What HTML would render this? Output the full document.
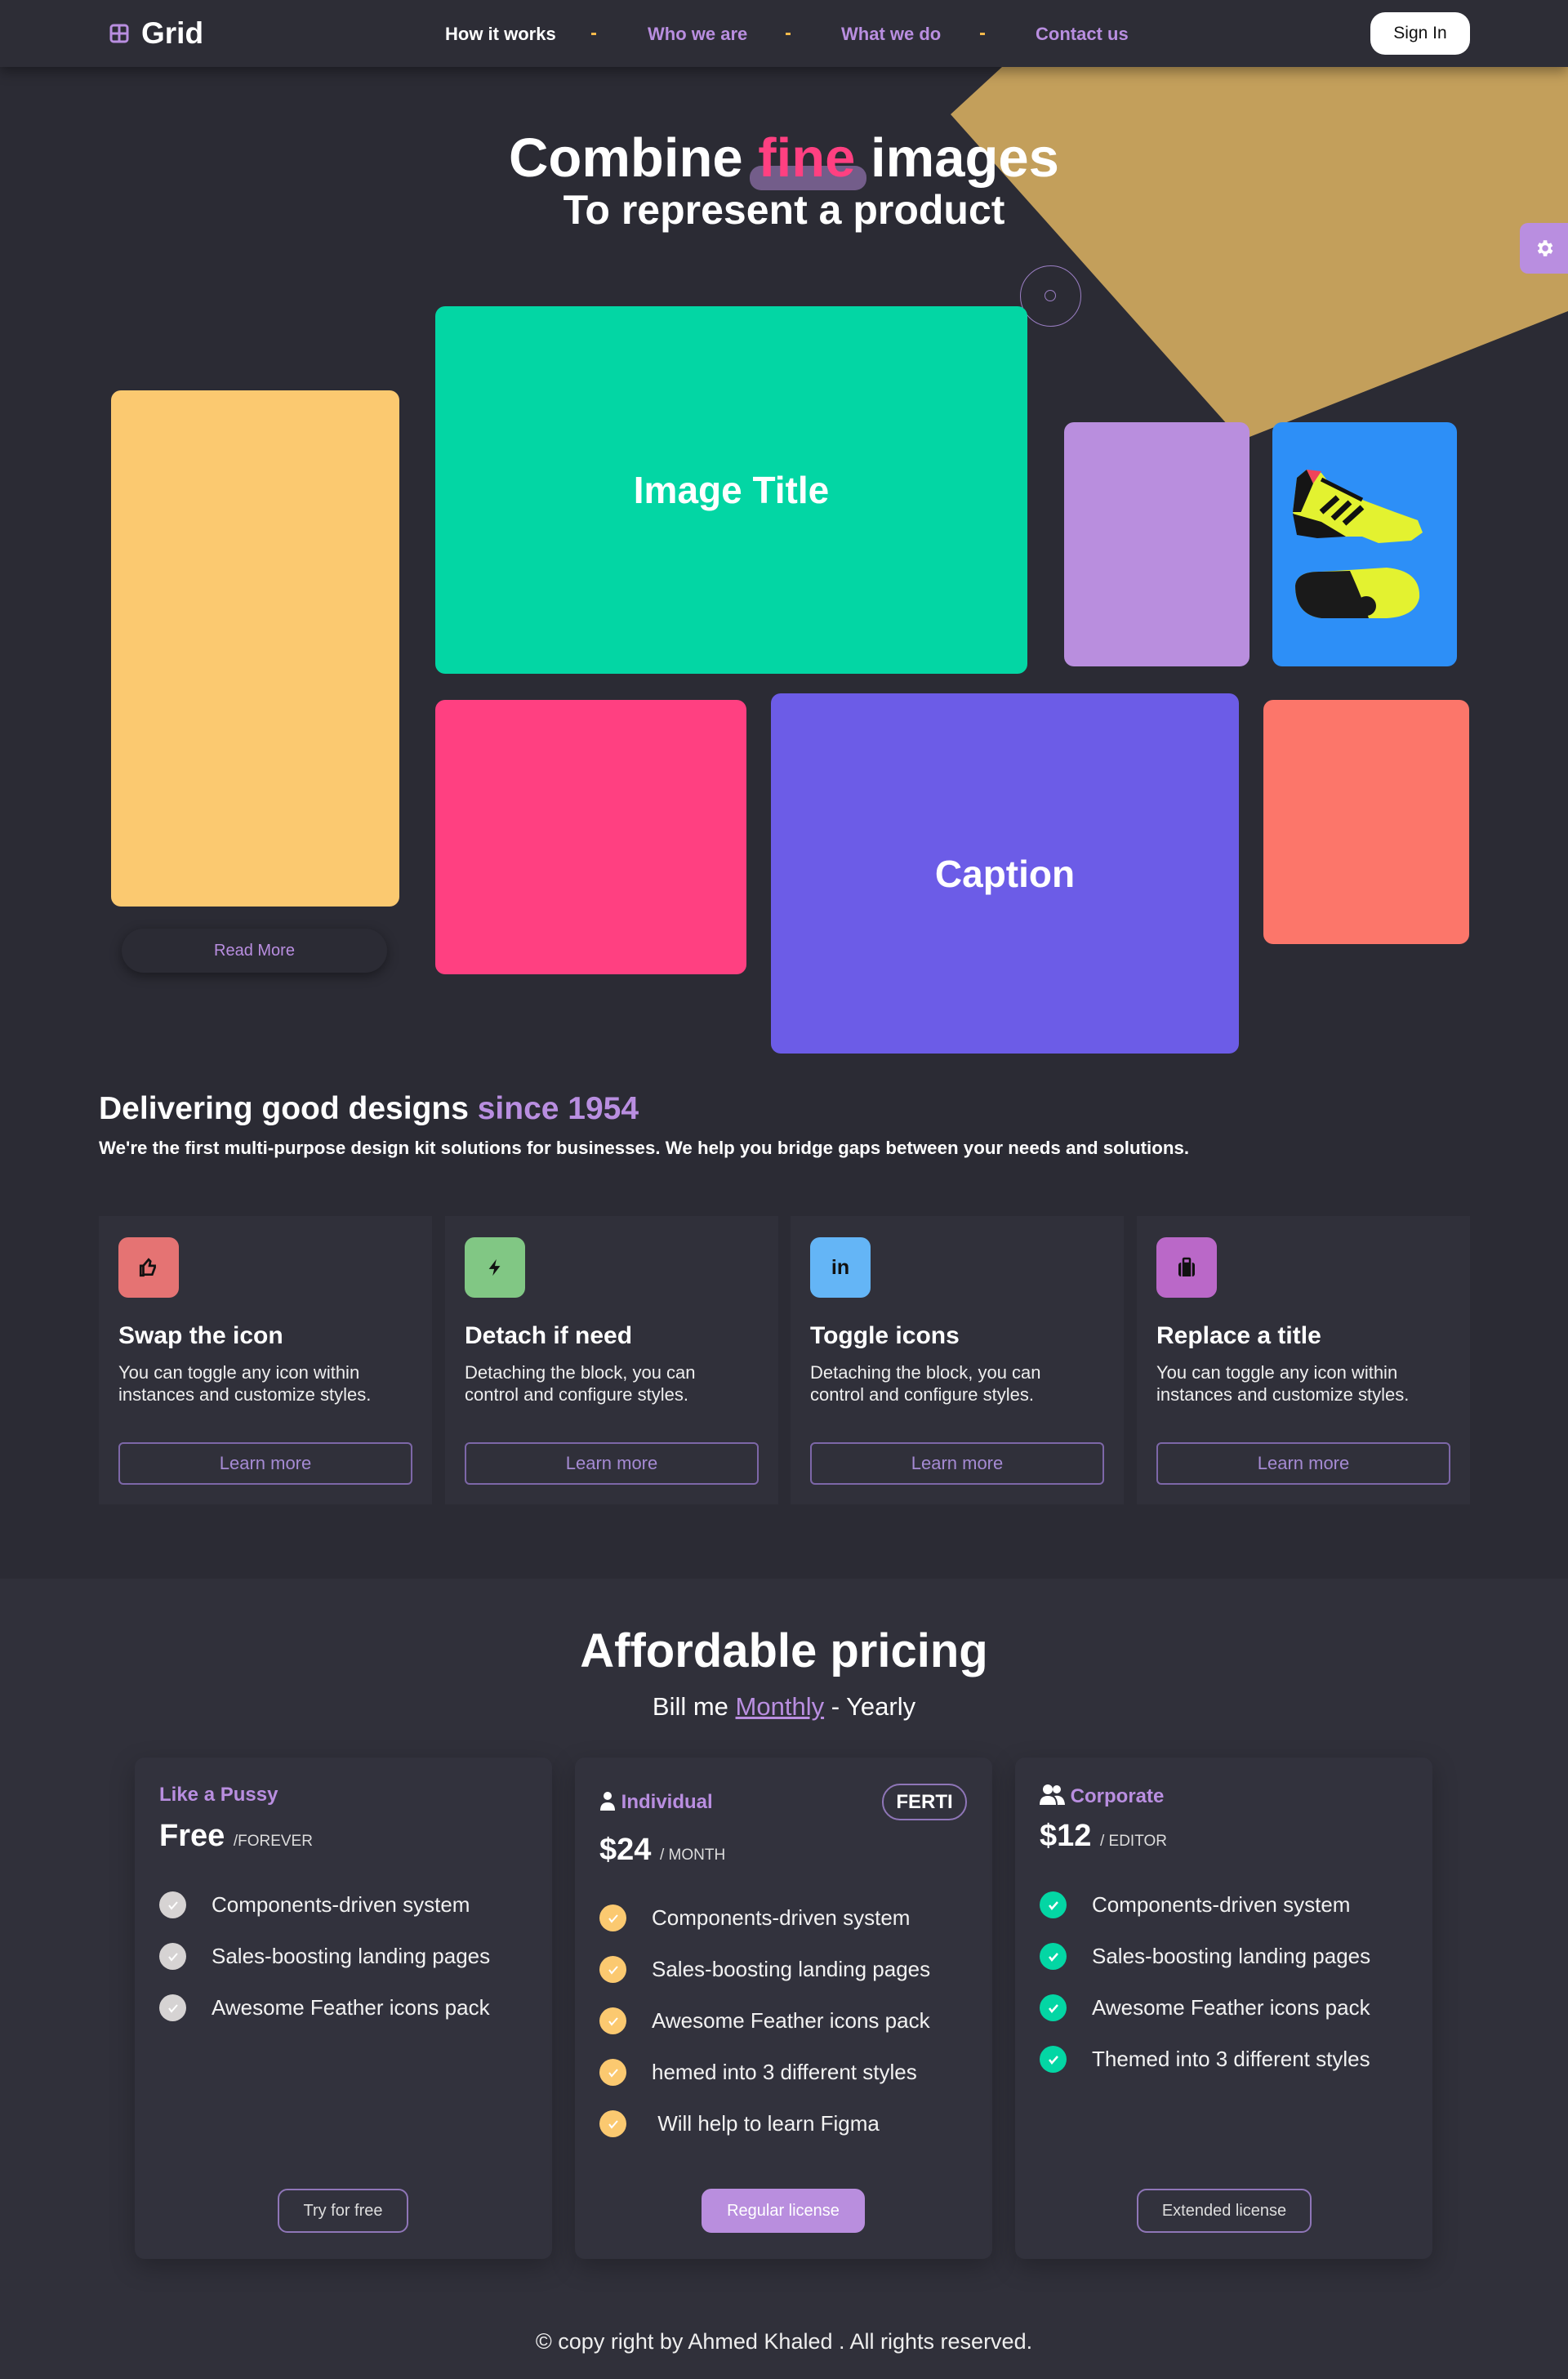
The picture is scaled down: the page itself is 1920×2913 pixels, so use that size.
<!DOCTYPE html>
<html><head><meta charset="utf-8"><style>
*{margin:0;padding:0;box-sizing:border-box}
body{width:1920px;height:2913px;background:#2b2b34;font-family:"Liberation Sans",sans-serif;color:#fff;position:relative;overflow:hidden}
.a{position:absolute}
.nav{left:0;top:0;width:1920px;height:82px;background:#2d2d36;box-shadow:0 6px 14px rgba(0,0,0,.35);z-index:5}
.nl{top:29px;font-size:22px;font-weight:bold}
.dot{top:40px;width:6px;height:3px;background:#f5b94b}
.card{border-radius:12px}
.t{font-weight:bold}
.fc{background:#30303a;top:1489px;height:353px;width:408px}
.ic{width:74px;height:74px;border-radius:12px;left:24px;top:26px;display:flex;align-items:center;justify-content:center}
.fc h3{position:absolute;left:24px;top:130px;font-size:30px}
.fc p{position:absolute;left:24px;top:178px;font-size:22px;line-height:27px;color:#eee;width:345px}
.lm{position:absolute;left:24px;top:277px;width:360px;height:52px;border:2px solid #7d67a8;border-radius:6px;color:#a58ad3;font-size:22px;text-align:center;line-height:48px}
.pc{background:#32323d;top:2152px;height:614px;width:511px;border-radius:12px;box-shadow:0 10px 30px rgba(0,0,0,.25)}
.pt{position:absolute;left:30px;font-size:24px;font-weight:bold;color:#b98ee0}
.pr{position:absolute;left:30px;font-size:38px;font-weight:bold}
.pr span{font-size:19px;font-weight:normal;color:#ddd}
.li{position:absolute;left:30px;font-size:26px;color:#f2f2f2;display:flex;align-items:center}
.ck{width:33px;height:33px;border-radius:50%;margin-right:31px;display:flex;align-items:center;justify-content:center;flex:none}
.btn{position:absolute;top:528px;height:54px;border:2px solid #8f76b8;border-radius:12px;font-size:20px;text-align:center;line-height:50px;color:#ddd}
</style></head><body>
<svg class="a" style="left:0;top:0" width="1920" height="700"><polygon points="1227,82 1920,82 1920,381 1520,539 1164,140" fill="#c39f5b"/></svg>
<div class="a nav">
 <svg class="a" style="left:134px;top:29px" width="24" height="24" viewBox="0 0 24 24"><rect x="2" y="2" width="20" height="20" rx="3" fill="none" stroke="#b98ee0" stroke-width="3"/><path d="M12 2v20M2 12h20" stroke="#b98ee0" stroke-width="3"/></svg>
 <div class="a t" style="left:173px;top:20px;font-size:37px">Grid</div>
 <div class="a nl" style="left:545px">How it works</div>
 <div class="a dot" style="left:724px"></div>
 <div class="a nl" style="left:793px;color:#b98ee0">Who we are</div>
 <div class="a dot" style="left:962px"></div>
 <div class="a nl" style="left:1030px;color:#b98ee0">What we do</div>
 <div class="a dot" style="left:1200px"></div>
 <div class="a nl" style="left:1268px;color:#b98ee0">Contact us</div>
 <div class="a" style="left:1678px;top:15px;width:122px;height:52px;background:#fff;border-radius:18px;color:#111;font-size:21px;text-align:center;line-height:52px">Sign In</div>
</div>
<div class="a" style="left:918px;top:203px;width:143px;height:30px;background:#735d8a;border-radius:14px"></div>
<div class="a t" style="left:0;width:1920px;top:154px;text-align:center;font-size:67px;line-height:80px">Combine <span style="color:#ff4081">fine</span> images</div>
<div class="a t" style="left:0;width:1920px;top:228px;text-align:center;font-size:50px">To represent a product</div>
<div class="a" style="left:1861px;top:273px;width:59px;height:62px;background:#b98ee0;border-radius:10px 0 0 10px;display:flex;align-items:center;justify-content:center"><svg width="26" height="26" viewBox="0 0 24 24"><path fill="#fff" d="M19.4 13a7.8 7.8 0 0 0 0-2l2.1-1.6-2-3.5-2.5 1a7 7 0 0 0-1.7-1L15 3h-4l-.4 2.7a7 7 0 0 0-1.7 1l-2.5-1-2 3.5L6.6 11a7.8 7.8 0 0 0 0 2l-2.2 1.6 2 3.5 2.5-1a7 7 0 0 0 1.7 1L11 21h4l.4-2.7a7 7 0 0 0 1.7-1l2.5 1 2-3.5zM13 15.5a3.5 3.5 0 1 1 0-7 3.5 3.5 0 0 1 0 7z"/></svg></div>
<div class="a" style="left:1249px;top:325px;width:75px;height:75px;border:1.5px solid #9b7fc4;border-radius:50%"></div>
<div class="a" style="left:1279px;top:355px;width:14px;height:14px;border:1.5px solid #9b7fc4;border-radius:50%"></div>

<div class="a card" style="left:136px;top:478px;width:353px;height:632px;background:#fbc970"></div>
<div class="a" style="left:149px;top:1137px;width:325px;height:54px;border-radius:27px;background:#2b2b34;box-shadow:0 4px 14px rgba(0,0,0,.4);color:#b98ee0;font-size:20px;text-align:center;line-height:54px">Read More</div>
<div class="a card t" style="left:533px;top:375px;width:725px;height:450px;background:#03d6a4;font-size:46px;display:flex;align-items:center;justify-content:center">Image Title</div>
<div class="a card" style="left:1303px;top:517px;width:227px;height:299px;background:#b98ede"></div>
<div class="a card" style="left:1558px;top:517px;width:226px;height:299px;background:#2d8ff7;overflow:hidden">
<svg width="226" height="299" viewBox="0 0 226 299">
<path d="M30 68 L42 58 L60 62 L70 75 L110 95 L150 110 L178 120 L184 135 L170 145 L130 148 L110 140 L55 140 L35 135 L25 110 Z" fill="#e3f230"/>
<path d="M30 68 L42 58 L50 75 L35 110 L25 110 Z" fill="#151515"/>
<path d="M42 58 L60 60 L50 75 Z" fill="#f0445a"/>
<path d="M25 112 L60 122 L90 140 L55 142 L30 138 Z" fill="#151515"/>
<path d="M60 110 L80 92 M74 118 L95 98 M88 124 L110 104" stroke="#111" stroke-width="7"/>
<path d="M60 70 L110 95" stroke="#111" stroke-width="5"/>
<path d="M28 200 Q30 182 60 183 L140 178 Q182 182 180 215 Q175 238 140 240 L60 240 Q28 236 28 200Z" fill="#e3f230"/>
<path d="M28 200 Q30 182 60 183 L95 182 Q110 215 118 240 L60 240 Q28 236 28 200Z" fill="#1a1a1a"/>
<circle cx="115" cy="225" r="12" fill="#1a1a1a"/>
</svg></div>
<div class="a card" style="left:533px;top:857px;width:381px;height:336px;background:#ff4081"></div>
<div class="a card t" style="left:944px;top:849px;width:573px;height:441px;background:#6c5ce7;font-size:46px;display:flex;align-items:center;justify-content:center">Caption</div>
<div class="a card" style="left:1547px;top:857px;width:252px;height:299px;background:#fc766a"></div>

<div class="a t" style="left:121px;top:1336px;font-size:39px">Delivering good designs <span style="color:#b98ee0">since 1954</span></div>
<div class="a t" style="left:121px;top:1393px;font-size:22.3px">We're the first multi-purpose design kit solutions for businesses. We help you bridge gaps between your needs and solutions.</div>

<div class="a fc" style="left:121px"><div class="a ic" style="background:#e57373"><svg width="26" height="26" viewBox="0 0 24 24" fill="none" stroke="#111" stroke-width="2.5"><path d="M3 10h3v11H3zM6 20h10l3-8v-2h-6l1-5-2-2-6 7"/></svg></div><h3>Swap the icon</h3><p>You can toggle any icon within instances and customize styles.</p><div class="lm">Learn more</div></div>
<div class="a fc" style="left:545px"><div class="a ic" style="background:#81c784"><svg width="22" height="28" viewBox="0 0 24 24"><path d="M14 1 4 14h7l-2 9 10-13h-7z" fill="#111"/></svg></div><h3>Detach if need</h3><p>Detaching the block, you can control and configure styles.</p><div class="lm">Learn more</div></div>
<div class="a fc" style="left:968px"><div class="a ic" style="background:#64b5f6;color:#111;font-weight:bold;font-size:25px">in</div><h3>Toggle icons</h3><p>Detaching the block, you can control and configure styles.</p><div class="lm">Learn more</div></div>
<div class="a fc" style="left:1392px"><div class="a ic" style="background:#ba68c8"><svg width="24" height="26" viewBox="0 0 24 26"><rect x="2" y="7" width="20" height="17" rx="3" fill="#111"/><rect x="8" y="2" width="8" height="6" rx="1" fill="none" stroke="#111" stroke-width="2.5"/><path d="M6 7v17M18 7v17" stroke="#ba68c8" stroke-width="1.5"/></svg></div><h3>Replace a title</h3><p>You can toggle any icon within instances and customize styles.</p><div class="lm">Learn more</div></div>

<div class="a" style="left:0;top:1933px;width:1920px;height:980px;background:#30303a"></div>
<div class="a t" style="left:0;width:1920px;top:1988px;text-align:center;font-size:58px">Affordable pricing</div>
<div class="a" style="left:0;width:1920px;top:2072px;text-align:center;font-size:31px">Bill me <span style="color:#b98ee0;text-decoration:underline">Monthly</span> - Yearly</div>

<div class="a pc" style="left:165px">
 <div class="pt" style="top:32px">Like a Pussy</div>
 <div class="pr" style="top:75px">Free <span>/FOREVER</span></div>
 <div class="li" style="top:164px"><div class="ck" style="background:#d6d3d3"><svg width="16" height="16" viewBox="0 0 16 16"><path d="M3 8l3 4 7-8" stroke="#fff" stroke-width="2" fill="none"/></svg></div>Components-driven system</div>
 <div class="li" style="top:227px"><div class="ck" style="background:#d6d3d3"><svg width="16" height="16" viewBox="0 0 16 16"><path d="M3 8l3 4 7-8" stroke="#fff" stroke-width="2" fill="none"/></svg></div>Sales-boosting landing pages</div>
 <div class="li" style="top:290px"><div class="ck" style="background:#d6d3d3"><svg width="16" height="16" viewBox="0 0 16 16"><path d="M3 8l3 4 7-8" stroke="#fff" stroke-width="2" fill="none"/></svg></div>Awesome Feather icons pack</div>
 <div class="btn" style="left:175px;width:160px">Try for free</div>
</div>
<div class="a pc" style="left:704px">
 <div class="pt" style="top:41px"><svg width="20" height="24" viewBox="0 0 20 24" style="vertical-align:-3px"><circle cx="10" cy="6" r="5" fill="#fff"/><path d="M1 24q0-10 9-10t9 10z" fill="#fff"/></svg> Individual</div>
 <div class="a t" style="left:376px;top:32px;width:104px;height:45px;border:2px solid #8f76b8;border-radius:22px;font-size:24px;text-align:center;line-height:41px">FERTI</div>
 <div class="pr" style="top:92px">$24 <span>/ MONTH</span></div>
 <div class="li" style="top:180px"><div class="ck" style="background:#fbc970"><svg width="16" height="16" viewBox="0 0 16 16"><path d="M3 8l3 4 7-8" stroke="#fff" stroke-width="2" fill="none"/></svg></div>Components-driven system</div>
 <div class="li" style="top:243px"><div class="ck" style="background:#fbc970"><svg width="16" height="16" viewBox="0 0 16 16"><path d="M3 8l3 4 7-8" stroke="#fff" stroke-width="2" fill="none"/></svg></div>Sales-boosting landing pages</div>
 <div class="li" style="top:306px"><div class="ck" style="background:#fbc970"><svg width="16" height="16" viewBox="0 0 16 16"><path d="M3 8l3 4 7-8" stroke="#fff" stroke-width="2" fill="none"/></svg></div>Awesome Feather icons pack</div>
 <div class="li" style="top:369px"><div class="ck" style="background:#fbc970"><svg width="16" height="16" viewBox="0 0 16 16"><path d="M3 8l3 4 7-8" stroke="#fff" stroke-width="2" fill="none"/></svg></div>hemed into 3 different styles</div>
 <div class="li" style="top:432px"><div class="ck" style="background:#fbc970"><svg width="16" height="16" viewBox="0 0 16 16"><path d="M3 8l3 4 7-8" stroke="#fff" stroke-width="2" fill="none"/></svg></div>&nbsp;Will help to learn Figma</div>
 <div class="btn" style="left:155px;width:200px;background:#b98ede;border-color:#b98ede;color:#fff">Regular license</div>
</div>
<div class="a pc" style="left:1243px">
 <div class="pt" style="top:32px"><svg width="31" height="26" viewBox="0 0 31 26" style="vertical-align:-3px"><circle cx="10" cy="7" r="6" fill="#fff"/><circle cx="21" cy="7" r="5" fill="#fff"/><path d="M0 26q0-11 10-11t10 11z" fill="#fff"/><path d="M18 15q12-2 13 11h-9q0-7-4-11z" fill="#fff"/></svg> Corporate</div>
 <div class="pr" style="top:75px">$12 <span>/ EDITOR</span></div>
 <div class="li" style="top:164px"><div class="ck" style="background:#03d6a4"><svg width="16" height="16" viewBox="0 0 16 16"><path d="M3 8l3 4 7-8" stroke="#fff" stroke-width="2.5" fill="none"/></svg></div>Components-driven system</div>
 <div class="li" style="top:227px"><div class="ck" style="background:#03d6a4"><svg width="16" height="16" viewBox="0 0 16 16"><path d="M3 8l3 4 7-8" stroke="#fff" stroke-width="2.5" fill="none"/></svg></div>Sales-boosting landing pages</div>
 <div class="li" style="top:290px"><div class="ck" style="background:#03d6a4"><svg width="16" height="16" viewBox="0 0 16 16"><path d="M3 8l3 4 7-8" stroke="#fff" stroke-width="2.5" fill="none"/></svg></div>Awesome Feather icons pack</div>
 <div class="li" style="top:353px"><div class="ck" style="background:#03d6a4"><svg width="16" height="16" viewBox="0 0 16 16"><path d="M3 8l3 4 7-8" stroke="#fff" stroke-width="2.5" fill="none"/></svg></div>Themed into 3 different styles</div>
 <div class="btn" style="left:149px;width:214px">Extended license</div>
</div>
<div class="a" style="left:0;width:1920px;top:2852px;text-align:center;font-size:27px;color:#eee">© copy right by Ahmed Khaled . All rights reserved.</div>
</body></html>
